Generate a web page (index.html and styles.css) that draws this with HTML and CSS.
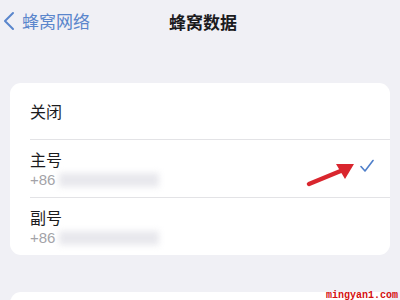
FILE: index.html
```html
<!DOCTYPE html>
<html lang="zh">
<head>
<meta charset="utf-8">
<link rel="stylesheet" href="styles.css">
</head>
<body>
<div class="screen">
  <header class="nav">
    <div class="back">
      <svg class="chev" width="12" height="20" viewBox="0 0 12 20"><path d="M10 2 L2 10 L10 18" fill="none" stroke="#5a86cc" stroke-width="2" stroke-linecap="round" stroke-linejoin="round"/></svg>
      <span class="back-label">蜂窝网络</span>
    </div>
    <div class="title">蜂窝数据</div>
  </header>

  <section class="card">
    <div class="row single">
      <span class="label">关闭</span>
    </div>
    <div class="row double">
      <div class="texts">
        <span class="label">主号</span>
        <span class="sub">+86 <span class="blur"></span></span>
      </div>
      <svg class="check" width="14" height="14" viewBox="0 0 14 14"><path d="M1 7.5 L5 12 L13 1.5" fill="none" stroke="#4f7fca" stroke-width="1.6" stroke-linecap="round" stroke-linejoin="round"/></svg>
    </div>
    <div class="row double last">
      <div class="texts">
        <span class="label">副号</span>
        <span class="sub">+86 <span class="blur"></span></span>
      </div>
    </div>
  </section>

  <section class="card second"></section>

  <svg class="arrow" width="60" height="30" viewBox="0 0 60 30"><path d="M4 24 L38 10" stroke="#d9262e" stroke-width="4.5" stroke-linecap="round"/><path d="M49 4 L31 4 L40 19 Z" fill="#d9262e"/></svg>
  <div class="watermark">mingyan1.com</div>
</div>
</body>
</html>
```

FILE: styles.css
```css
html, body {
  margin: 0;
  padding: 0;
}
body {
  background: #f0f0f5;
  font-family: "Noto Sans CJK SC", "Noto Sans", sans-serif;
}
.screen {
  position: relative;
  width: 400px;
  height: 300px;
  overflow: hidden;
  background: #f0f0f5;
}
.nav {
  position: relative;
  height: 44px;
  display: flex;
  align-items: center;
  justify-content: center;
}
.back {
  position: absolute;
  left: 3px;
  top: 11px;
  display: flex;
  align-items: center;
  gap: 7px;
}
.chev {
  display: block;
}
.back-label {
  color: #5a86cc;
  font-size: 17px;
  line-height: 20px;
}
.title {
  font-size: 17px;
  font-weight: 700;
  color: #1b1b1d;
  line-height: 20px;
  margin-top: -1px;
  margin-left: 6px;
}
.card {
  margin: 39px 10px 0;
  background: #ffffff;
  border-radius: 11px;
  padding-left: 20px;
}
.row {
  display: flex;
  align-items: center;
  border-bottom: 1px solid #e3e3e6;
  padding-right: 16px;
}
.row.last {
  border-bottom: none;
}
.row.single {
  height: 56px;
}
.row.double {
  height: 57px;
  justify-content: space-between;
}
.texts {
  display: flex;
  flex-direction: column;
  gap: 2px;
}
.label {
  font-size: 16px;
  line-height: 20px;
  color: #1c1c1e;
}
.sub {
  font-size: 15px;
  line-height: 17px;
  color: #a3a3a8;
  display: flex;
  align-items: center;
  gap: 4px;
  font-family: "Liberation Sans", "Noto Sans CJK SC", sans-serif;
}
.blur {
  display: inline-block;
  width: 100px;
  height: 14px;
  background: #e8e8ed;
  filter: blur(3px);
}
.check {
  display: block;
  margin-top: -6px;
}
.card.second {
  margin-top: 37px;
  height: 40px;
}
.arrow {
  position: absolute;
  left: 305px;
  top: 160px;
}
.watermark {
  position: absolute;
  right: 2px;
  bottom: -2px;
  font-family: "Liberation Mono", monospace;
  font-size: 10px;
  font-weight: 700;
  color: #d41010;
  line-height: 12px;
}
```
